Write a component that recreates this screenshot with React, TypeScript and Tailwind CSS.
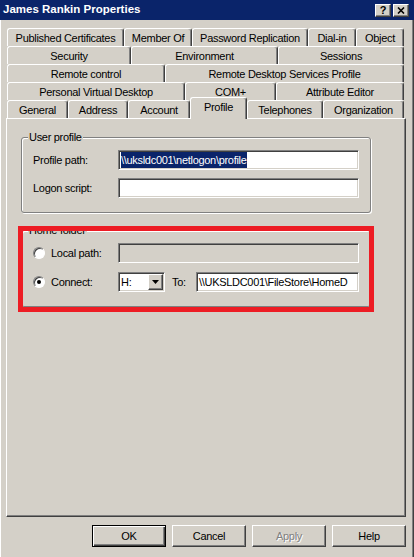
import React from "react";

type TabDef = { label: string; w: string; active?: boolean };

const tabRows: TabDef[][] = [
	[
		{ label: "Published Certificates", w: "w-[117px]" },
		{ label: "Member Of", w: "w-[68px]" },
		{ label: "Password Replication", w: "w-[116px]" },
		{ label: "Dial-in", w: "w-[48px]" },
		{ label: "Object", w: "w-[48px]" },
	],
	[
		{ label: "Security", w: "w-[124px]" },
		{ label: "Environment", w: "w-[147px]" },
		{ label: "Sessions", w: "w-[126px]" },
	],
	[
		{ label: "Remote control", w: "w-[158px]" },
		{ label: "Remote Desktop Services Profile", w: "w-[239px]" },
	],
	[
		{ label: "Personal Virtual Desktop", w: "w-[178px]" },
		{ label: "COM+", w: "w-[91px]" },
		{ label: "Attribute Editor", w: "w-[128px]" },
	],
	[
		{ label: "General", w: "w-[61px]" },
		{ label: "Address", w: "w-[60px]" },
		{ label: "Account", w: "w-[62px]" },
		{ label: "Profile", w: "w-[57px]", active: true },
		{ label: "Telephones", w: "w-[76px]" },
		{ label: "Organization", w: "w-[81px]" },
	],
];

const Tab = ({ label, w, active }: TabDef) =>
	active ? (
		<div
			className={`${w} relative z-10 -mt-[3px] h-[22px] rounded-t-[3px] border-l border-t border-r border-white border-r-[#404040] bg-[#d4d0c8] shadow-[inset_-1px_0_0_#808080]`}
		>
			<div className="flex h-[18px] items-center justify-center pt-[1px]">{label}</div>
		</div>
	) : (
		<div
			className={`${w} flex h-[18px] items-center justify-center rounded-t-[3px] border-l border-t border-r border-white border-r-[#404040] pt-[1px] shadow-[inset_-1px_0_0_#808080]`}
		>
			{label}
		</div>
	);

const Field = ({
	className,
	disabled,
	children,
}: {
	className: string;
	disabled?: boolean;
	children?: React.ReactNode;
}) => (
	<div
		className={`${className} flex h-[20px] items-center overflow-hidden whitespace-nowrap border border-[#808080] border-b-white border-r-white px-[2px] shadow-[inset_1px_1px_0_#404040,inset_-1px_-1px_0_#d4d0c8] ${
			disabled ? "bg-[#d4d0c8]" : "bg-white"
		}`}
	>
		{children}
	</div>
);

const Group = ({
	title,
	className,
	children,
}: {
	title: string;
	className?: string;
	children: React.ReactNode;
}) => (
	<div
		className={`relative w-[350px] rounded-[3px] border border-[#808080] shadow-[inset_1px_1px_0_#ffffff,1px_1px_0_#ffffff] ${className ?? ""}`}
	>
		<span className="absolute -top-[8px] left-[6px] bg-[#d4d0c8] px-[1px] leading-[14px]">
			{title}
		</span>
		{children}
	</div>
);

const Radio = ({ checked }: { checked?: boolean }) => (
	<div className="flex h-[12px] w-[12px] shrink-0 items-center justify-center rounded-full border border-[#808080] border-b-white border-r-white bg-white shadow-[inset_1px_1px_0_#404040]">
		{checked && <div className="h-[4px] w-[4px] rounded-full bg-black" />}
	</div>
);

const Button = ({
	label,
	primary,
	disabled,
}: {
	label: string;
	primary?: boolean;
	disabled?: boolean;
}) => (
	<button
		type="button"
		className={`flex h-[22px] w-[74px] items-center justify-center ${
			primary
				? "border border-black shadow-[inset_1px_1px_0_#ffffff,inset_-1px_-1px_0_#404040,inset_-2px_-2px_0_#808080]"
				: "border border-white border-b-[#404040] border-r-[#404040] shadow-[inset_-1px_-1px_0_#808080]"
		} ${disabled ? "text-[#808080] [text-shadow:1px_1px_0_#ffffff]" : "text-black"}`}
	>
		{label}
	</button>
);

const TitleButton = ({ children }: { children: React.ReactNode }) => (
	<div className="flex h-[13px] w-[16px] items-center justify-center border border-white border-b-[#404040] border-r-[#404040] bg-[#d4d0c8] shadow-[inset_-1px_-1px_0_#808080]">
		{children}
	</div>
);

export default function App() {
	return (
		<div className="h-[557px] w-[414px] overflow-hidden bg-[#d4d0c8] font-['Liberation_Sans',Arial,sans-serif] text-[11px] tracking-[-0.3px] text-black shadow-[inset_1px_0_0_#ffffff,inset_-1px_0_0_#404040,inset_-2px_0_0_#808080]">
			{/* title bar */}
			<div className="flex h-[20px] items-center bg-[#0a246a] pl-[3px] pr-[5px]">
				<span className="text-[11.5px] font-bold tracking-normal text-white">
					James Rankin Properties
				</span>
				<div className="ml-auto flex gap-[2px]">
					<TitleButton>
						<span className="text-[11px] font-bold leading-none">?</span>
					</TitleButton>
					<TitleButton>
						<svg width="8" height="7" viewBox="0 0 8 7">
							<path d="M1 0.5 L7 6.5 M7 0.5 L1 6.5" stroke="#000" strokeWidth="1.6" />
						</svg>
					</TitleButton>
				</div>
			</div>

			{/* tab rows */}
			<div className="ml-[7px] mt-[8px] flex w-[397px] flex-col">
				{tabRows.map((row, i) => (
					<div key={i} className="flex h-[18px]">
						{row.map((t) => (
							<Tab key={t.label} {...t} />
						))}
					</div>
				))}
			</div>

			{/* page */}
			<div className="relative ml-[6px] h-[399px] w-[400px] border border-white border-b-[#404040] border-r-[#404040] px-[14px] pt-[18px] shadow-[inset_-1px_-1px_0_#808080]">
				<Group title="User profile">
					<div className="flex flex-col gap-[8px] pb-[14px] pl-[11px] pt-[12px]">
						<div className="flex h-[20px] items-center">
							<span className="w-[85px]">Profile path:</span>
							<Field className="w-[241px]">
								<span className="bg-[#0a246a] leading-[16px] text-white">
									{"\\\\uksldc001\\netlogon\\profile"}
								</span>
							</Field>
						</div>
						<div className="flex h-[20px] items-center">
							<span className="w-[85px]">Logon script:</span>
							<Field className="w-[241px]" />
						</div>
					</div>
				</Group>

				<Group title="Home folder" className="mt-[17px]">
					<div className="flex flex-col gap-[9px] pb-[14px] pl-[11px] pt-[12px]">
						<div className="flex h-[20px] items-center">
							<div className="flex w-[85px] items-center gap-[6px]">
								<Radio />
								<span>Local path:</span>
							</div>
							<Field className="w-[241px]" disabled />
						</div>
						<div className="flex h-[20px] items-center">
							<div className="flex w-[85px] items-center gap-[6px]">
								<Radio checked />
								<span>Connect:</span>
							</div>
							<Field className="w-[47px] pr-[1px]">
								<span>H:</span>
								<div className="ml-auto flex h-[16px] w-[15px] items-center justify-center border border-white border-b-[#404040] border-r-[#404040] bg-[#d4d0c8] shadow-[inset_-1px_-1px_0_#808080]">
									<svg width="7" height="4" viewBox="0 0 7 4">
										<polygon points="0,0 7,0 3.5,4" fill="#000" />
									</svg>
								</div>
							</Field>
							<span className="ml-[7px] w-[24px]">To:</span>
							<Field className="w-[163px]">
								<span>{"\\\\UKSLDC001\\FileStore\\HomeD"}</span>
							</Field>
						</div>
					</div>
				</Group>

				{/* annotation box */}
				<div className="pointer-events-none absolute left-[11px] top-[107px] z-20 h-[86px] w-[356px] border-[5px] border-[#ed1c24]" />
			</div>

			{/* dialog buttons */}
			<div className="mt-[8px] flex justify-end gap-[6px] pr-[8px]">
				<Button label="OK" primary />
				<Button label="Cancel" />
				<Button label="Apply" disabled />
				<Button label="Help" />
			</div>
		</div>
	);
}
